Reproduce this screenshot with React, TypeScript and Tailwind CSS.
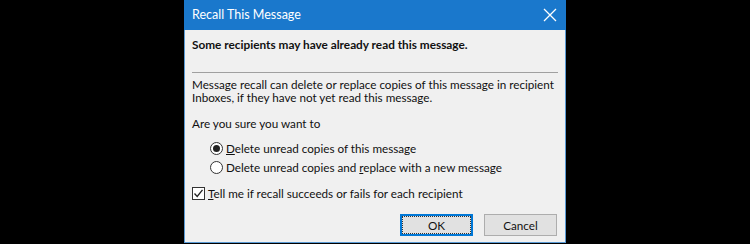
import { useState } from 'react'

const font = { fontFamily: 'Lato, "Noto Sans", sans-serif' }

function Radio({ checked }: { checked: boolean }) {
  return (
    <span className="w-[13px] h-[13px] rounded-full border border-[#333] bg-white flex items-center justify-center shrink-0">
      {checked && <span className="w-[7px] h-[7px] rounded-full bg-[#222]" />}
    </span>
  )
}

export default function App() {
  const [choice, setChoice] = useState(0)
  const [notify, setNotify] = useState(true)

  return (
    <div className="w-[750px] h-[244px] bg-black pl-[184px]" style={font}>
      <div className="w-[382px] h-[243px] bg-[#f0f0f0] border border-[#5a9bd5] border-t-0 flex flex-col">
        <div className="h-[30px] bg-[#1a78cc] flex items-center justify-between pl-2 pr-[9px] -mx-px">
          <span className="text-[12.5px] text-white">Recall This Message</span>
          <svg width="14" height="14" viewBox="0 0 14 14" className="text-white">
            <path d="M1 1 L13 13 M13 1 L1 13" stroke="currentColor" strokeWidth="1.3" />
          </svg>
        </div>

        <div className="flex flex-col px-[7px] text-[11.7px] leading-[13px] text-[#111]">
          <p className="mt-[8px] font-bold text-[11.8px] leading-[14px]">Some recipients may have already read this message.</p>
          <div className="mt-[20px] border-t border-[#a0a0a0]" />
          <p className="mt-[5px] whitespace-nowrap">
            Message recall can delete or replace copies of this message in recipient
            <br />
            Inboxes, if they have not yet read this message.
          </p>
          <p className="mt-[13px]">Are you sure you want to</p>

          <div className="mt-[12px] pl-[18px] flex flex-col gap-[6px]">
            <label className="flex items-center gap-[3px]" onClick={() => setChoice(0)}>
              <Radio checked={choice === 0} />
              <span><u>D</u>elete unread copies of this message</span>
            </label>
            <label className="flex items-center gap-[3px]" onClick={() => setChoice(1)}>
              <Radio checked={choice === 1} />
              <span>Delete unread copies and <u>r</u>eplace with a new message</span>
            </label>
          </div>

          <label className="mt-[13px] flex items-center gap-[3px]" onClick={() => setNotify(!notify)}>
            <span className="w-[13px] h-[13px] border border-[#333] bg-white flex items-center justify-center shrink-0">
              {notify && (
                <svg width="11" height="11" viewBox="0 0 11 11">
                  <path d="M1.5 5.5 L4.2 8.5 L9.5 1.8" fill="none" stroke="#222" strokeWidth="1.3" />
                </svg>
              )}
            </span>
            <span><u>T</u>ell me if recall succeeds or fails for each recipient</span>
          </label>

          <div className="mt-[14px] flex justify-end gap-[11px] pr-px">
            <button className="w-[73px] h-[22px] bg-[#e1e1e1] border-2 border-[#0078d7] flex items-center justify-center">
              <span className="w-full h-full border border-dotted border-[#333] flex items-center justify-center">OK</span>
            </button>
            <button className="w-[73px] h-[22px] bg-[#e1e1e1] border border-[#adadad]">Cancel</button>
          </div>
        </div>
      </div>
    </div>
  )
}
